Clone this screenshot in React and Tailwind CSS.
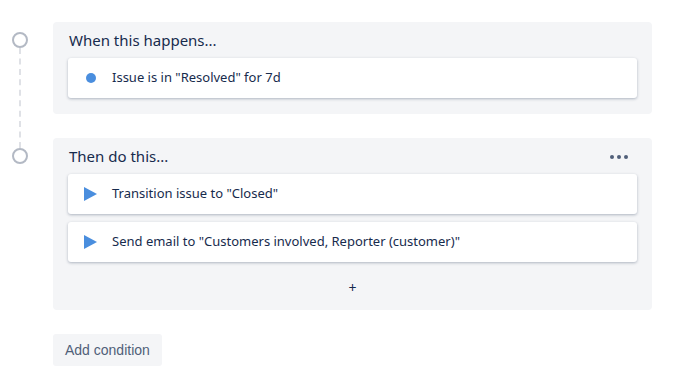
import React from 'react';

const font = { fontFamily: '"Noto Sans", "Open Sans", sans-serif' };

const Dot = () => <span className="block w-[10px] h-[10px] rounded-full bg-[#4a8ede]" />;

const Play = () => (
    <svg width="13" height="14" viewBox="0 0 13 14">
        <polygon points="0,0 13,7 0,14" fill="#4a8ede" />
    </svg>
);

const Card = ({ icon, text }) => (
    <div className="h-[40px] bg-white rounded-[3px] shadow-[0_1px_3px_rgba(9,30,66,0.3)] flex items-center">
        <div className="w-[44px] flex justify-center pl-[1px]">{icon}</div>
        <span className="text-[13px] text-[#172b4d]">{text}</span>
    </div>
);

const Node = () => (
    <span className="block w-[16px] h-[16px] rounded-full border-2 border-[#b3b9c4] bg-white" />
);

export default function App() {
    return (
        <div className="w-[676px] h-[379px] bg-white relative" style={font}>
            {/* Timeline */}
            <div className="absolute left-[12px] top-[32px] flex flex-col items-center">
                <Node />
                <div className="h-[100px] border-l-2 border-dashed border-[#dfe1e6]" />
                <Node />
            </div>

            <div className="pl-[53px] pr-[24px] pt-[22px] flex flex-col">
                {/* Trigger */}
                <div className="bg-[#f4f5f7] rounded-[4px] pt-[7px] pb-[16px] px-[15px]">
                    <div className="text-[15px] text-[#172b4d] h-[29px] leading-[22px] pl-[1px]">When this happens...</div>
                    <Card icon={<Dot />} text={'Issue is in "Resolved" for 7d'} />
                </div>

                {/* Actions */}
                <div className="mt-[24px] bg-[#f4f5f7] rounded-[4px] pt-[7px] px-[15px]">
                    <div className="flex items-start justify-between h-[29px]">
                        <span className="text-[15px] text-[#172b4d] leading-[22px] pl-[1px]">Then do this...</span>
                        <span className="flex gap-[3px] pr-[9px] pt-[10px]">
                            <span className="w-[4px] h-[4px] rounded-full bg-[#505f79]" />
                            <span className="w-[4px] h-[4px] rounded-full bg-[#505f79]" />
                            <span className="w-[4px] h-[4px] rounded-full bg-[#505f79]" />
                        </span>
                    </div>
                    <div className="flex flex-col gap-[8px]">
                        <Card icon={<Play />} text={'Transition issue to "Closed"'} />
                        <Card icon={<Play />} text={'Send email to "Customers involved, Reporter (customer)"'} />
                    </div>
                    <div className="h-[48px] pt-[3px] flex items-center justify-center text-[14px] text-[#172b4d]">+</div>
                </div>

                {/* Add condition */}
                <div className="mt-[24px]">
                    <button
                        className="h-[32px] px-[12px] rounded-[3px] bg-[#f4f5f7] text-[14px] text-[#505f79]"
                        style={{ fontFamily: '"Liberation Sans", Arial, sans-serif' }}
                    >
                        Add condition
                    </button>
                </div>
            </div>
        </div>
    );
}
